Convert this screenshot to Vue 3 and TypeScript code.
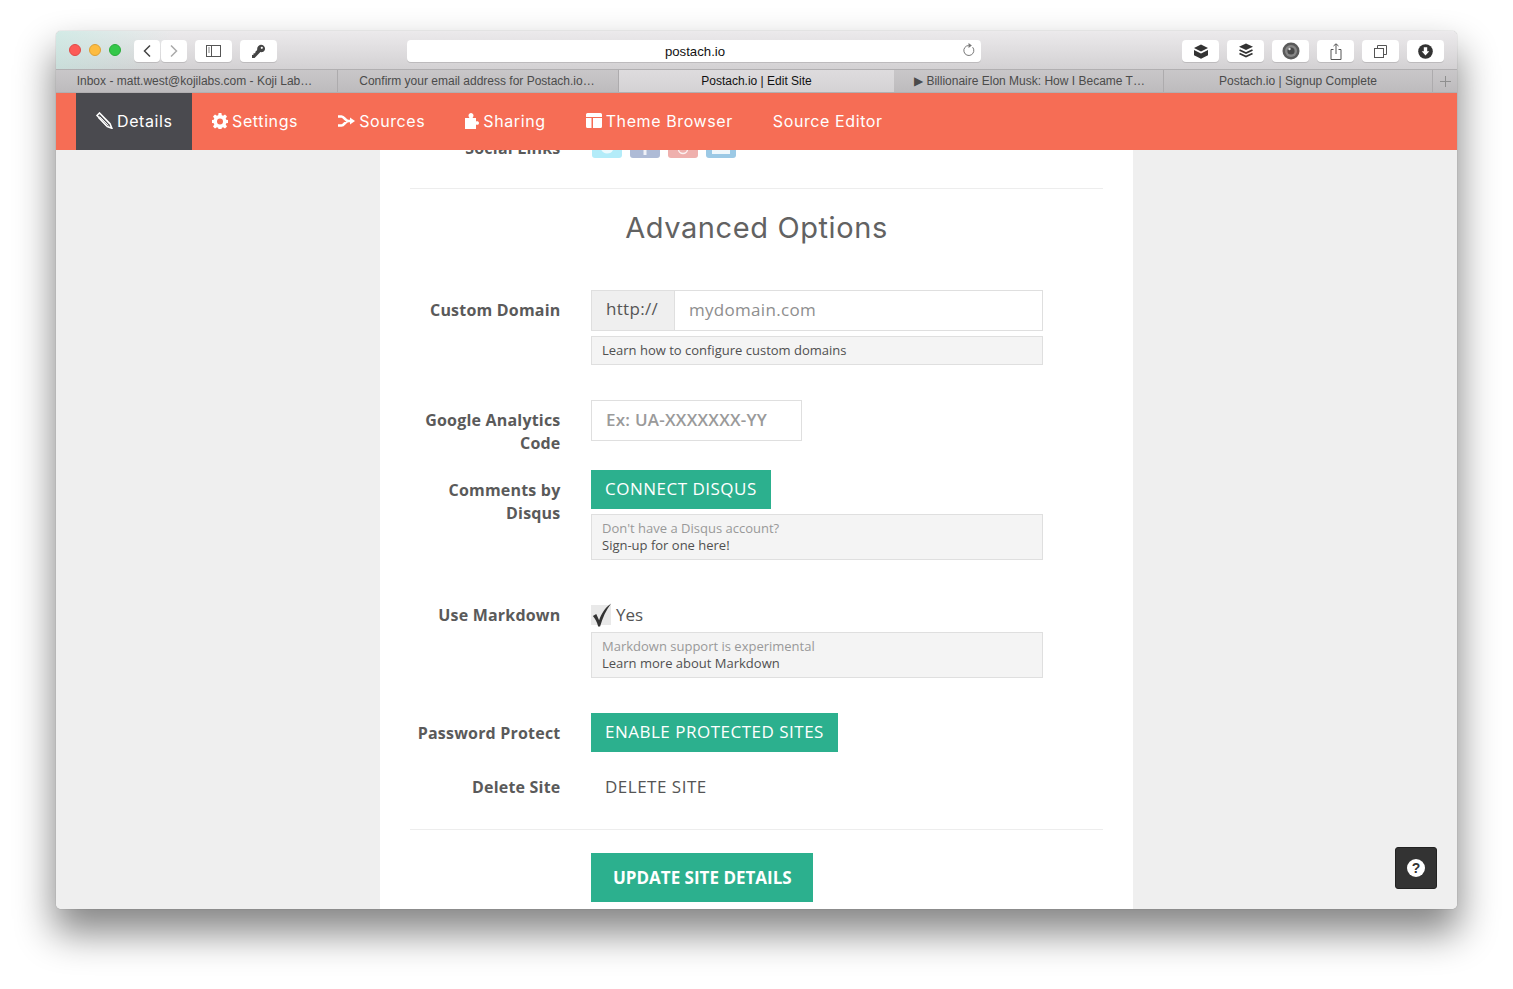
<script setup lang="ts">
const tabs = [
  { label: 'Inbox - matt.west@kojilabs.com - Koji Lab…', cls: 'tab-a' },
  { label: 'Confirm your email address for Postach.io…', cls: 'tab-b' },
  { label: 'Postach.io | Edit Site', cls: 'tab-c active' },
  { label: '▶ Billionaire Elon Musk: How I Became T…', cls: 'tab-d' },
  { label: 'Postach.io | Signup Complete', cls: 'tab-e' },
]
</script>

<template>
  <div class="stage">
    <div class="window">
      <header class="toolbar">
        <div class="lights">
          <span class="light red"></span><span class="light yellow"></span><span class="light lime"></span>
        </div>
        <div class="btn nav-btn first">
          <svg width="10" height="14" viewBox="0 0 10 14"><path d="M8 1.500 2.500 7 8 12.500" fill="none" stroke="#444" stroke-width="1.500"/></svg>
        </div>
        <div class="btn nav-btn second">
          <svg width="10" height="14" viewBox="0 0 10 14"><path d="M2 1.500 7.500 7 2 12.500" fill="none" stroke="#aaa" stroke-width="1.500"/></svg>
        </div>
        <div class="btn wide side">
          <svg width="15" height="12" viewBox="0 0 15 12"><rect x=".5" y=".5" width="14" height="11" fill="none" stroke="#555"/><path d="M5.500 .5v11" stroke="#555"/><path d="M2 3h2M2 5h2M2 7h2" stroke="#888"/></svg>
        </div>
        <div class="btn wide key">
          <svg width="15" height="15" viewBox="0 0 15 15"><path d="M9.800.8a4 4 0 0 1 4.200 4.400c-.4 2.200-2.600 3.500-4.600 2.900L3.600 14H1v-3l1.500-.2.1-1.500 1.600-.1.2-1.400 1.800-1.700C5.700 3.500 7.500 1 9.800.8Z" fill="#444"/><circle cx="10.800" cy="3.800" r="1.100" fill="#fff"/></svg>
        </div>
        <div class="url">
          <span class="url-text">postach.io</span>
          <svg class="reload" width="13" height="14" viewBox="0 0 13 14"><path d="M10.600 4.200A5 5 0 1 1 6.500 2.500" fill="none" stroke="#777" stroke-width="1"/><path d="M6.500 0v5l3.400-2.500Z" fill="#777"/></svg>
        </div>
        <div class="right-btns">
          <div class="btn wide">
            <svg width="16" height="15" viewBox="0 0 16 15"><path d="M8 .5 15 4 8 7.500 1 4Z" fill="#333"/><path d="M1 6 8 9.500 15 6v5.300l-7 3.500-7-3.500Z" fill="#333"/></svg>
          </div>
          <div class="btn wide">
            <svg width="16" height="16" viewBox="0 0 16 16"><path d="M8 .5 15 3.700 8 7 1 3.700Z" fill="#333"/><path d="M1.500 7 8 10l6.500-3M1.500 10.500 8 13.500l6.500-3" fill="none" stroke="#333" stroke-width="1.800"/></svg>
          </div>
          <div class="btn wide">
            <svg width="18" height="18" viewBox="0 0 18 18"><circle cx="9" cy="9" r="8.500" fill="#5a5a5a"/><circle cx="9" cy="9" r="6" fill="#868686"/><circle cx="9" cy="9" r="3.600" fill="#484848"/><circle cx="7.500" cy="7" r="1.200" fill="#ddd"/></svg>
          </div>
          <div class="btn wide">
            <svg width="12" height="17" viewBox="0 0 12 17"><path d="M3.500 6.500H1v10h10v-10H8.500M6 11V1M3.500 3 6 .8 8.500 3" fill="none" stroke="#555"/></svg>
          </div>
          <div class="btn wide">
            <svg width="13" height="13" viewBox="0 0 13 13"><path d="M3.500 3.500V.5h9v9h-3" fill="none" stroke="#555"/><rect x=".5" y="3.500" width="9" height="9" fill="none" stroke="#555"/></svg>
          </div>
          <div class="btn wide">
            <svg width="15" height="15" viewBox="0 0 15 15"><circle cx="7.500" cy="7.500" r="7.300" fill="#333"/><path d="M5.800 3.200h3.400v4h2.100L7.500 11.600 3.700 7.200h2.100Z" fill="#fff"/></svg>
          </div>
        </div>
      </header>

      <div class="tabs">
        <div v-for="t in tabs" :key="t.label" class="tab" :class="t.cls">{{ t.label }}</div>
        <div class="tab-plus">
          <svg width="11" height="11" viewBox="0 0 11 11"><path d="M5.500 0v11M0 5.500h11" stroke="#8f8f8f"/></svg>
        </div>
      </div>

      <nav class="topnav">
        <a class="item current">
          <svg width="17" height="17" viewBox="0 0 17 17"><path d="M1 3.500 3.500 1 14 11.800l1.800 4.400-4.500-1.700Z" fill="none" stroke="#fff" stroke-width="1.600"/><path d="M3.500 4.500l9 9M5.500 3.500l8 8.500M2.500 6l8 8" stroke="#fff" stroke-width=".9"/></svg>
          <span>Details</span>
        </a>
        <a class="item">
          <svg width="16" height="16" viewBox="0 0 16 16"><path fill="#fff" fill-rule="evenodd" d="M6.600 0h2.800l.4 2.200 1.300.6L13 1.500l2 2-1.300 1.900.5 1.300 2.300.4v2.800l-2.300.4-.5 1.300 1.300 1.900-2 2-1.900-1.300-1.300.5-.4 2.300H6.600l-.4-2.300-1.300-.5L3 15.500l-2-2 1.300-1.900-.5-1.300L-.5 9.900V7.100l2.300-.4.5-1.300L1 3.500l2-2 1.900 1.300 1.300-.6ZM8 5.500a3 3 0 1 0 0 6 3 3 0 0 0 0-6Z"/></svg>
          <span>Settings</span>
        </a>
        <a class="item">
          <svg width="17" height="12" viewBox="0 0 17 12"><path d="M0 1.500h3.500c3 0 3.500 4.500 7 4.500h2M0 10.500h3.500c3 0 3.500-4.500 7-4.500" fill="none" stroke="#fff" stroke-width="2.600"/><path d="M12 2.500 17 6l-5 3.500Z" fill="#fff"/></svg>
          <span>Sources</span>
        </a>
        <a class="item">
          <svg width="14" height="16" viewBox="0 0 14 16"><path fill="#fff" d="M0 5h4.500C3.700 4 3.500 3.300 3.500 2.600 3.500 1 4.800 0 6 0s2.500 1 2.500 2.600c0 .7-.2 1.400-1 2.400H11v3.500c1-.6 3-.4 3 1.500s-2 2.200-3 1.500V16H0Z"/></svg>
          <span>Sharing</span>
        </a>
        <a class="item">
          <svg width="16" height="15" viewBox="0 0 16 15"><path fill="#fff" d="M1.500 0h13A1.500 1.500 0 0 1 16 1.500V4H0V1.500A1.500 1.500 0 0 1 1.500 0ZM0 5h5.500v10H1.500A1.500 1.500 0 0 1 0 13.500ZM7 5h9v8.500a1.500 1.500 0 0 1-1.500 1.500H7Z"/></svg>
          <span>Theme Browser</span>
        </a>
        <a class="item"><span>Source Editor</span></a>
      </nav>

      <main class="content">
        <section class="card">
          <div class="row social-row">
            <label class="label">Social Links</label>
            <div class="socials">
              <span class="social tw"><svg width="30" height="21" viewBox="0 0 30 21"><path d="M9 12h12v1c-1 2.500-3 3.500-6 3.500S10 15 9 12Z" fill="#fff" opacity=".75"/></svg></span>
              <span class="social fb"><svg width="30" height="21" viewBox="0 0 30 21"><rect x="13.500" y="11" width="3" height="7" fill="#fff" opacity=".8"/></svg></span>
              <span class="social ig"><svg width="30" height="21" viewBox="0 0 30 21"><circle cx="15" cy="12" r="4.500" fill="none" stroke="#fff" stroke-width="1.400" opacity=".8"/></svg></span>
              <span class="social em"><svg width="30" height="21" viewBox="0 0 30 21"><rect x="6" y="10" width="18" height="7" fill="#fff" opacity=".85"/></svg></span>
            </div>
          </div>
          <hr class="rule first-rule" />
          <h2 class="title">Advanced Options</h2>

          <div class="row domain-row">
            <label class="label">Custom Domain</label>
            <div class="field">
              <div class="group">
                <span class="prefix">http://</span>
                <span class="input-text">mydomain.com</span>
              </div>
              <div class="help one">Learn how to configure custom domains</div>
            </div>
          </div>

          <div class="row ga-row">
            <label class="label">Google Analytics Code</label>
            <div class="field">
              <div class="ga-input">Ex: UA-XXXXXXX-YY</div>
            </div>
          </div>

          <div class="row disqus-row">
            <label class="label">Comments by Disqus</label>
            <div class="field">
              <a class="cta">CONNECT DISQUS</a>
              <div class="help two">
                <span class="muted">Don't have a Disqus account?</span>
                <span>Sign-up for one here!</span>
              </div>
            </div>
          </div>

          <div class="row md-row">
            <label class="label">Use Markdown</label>
            <div class="field">
              <div class="check-line">
                <span class="box">
                  <svg class="tick" width="22" height="24" viewBox="0 0 22 25"><path d="M1.500 13.500 5 11.500l3 6.500C10 11.500 14 5 20.500.5 15.500 7 11.500 15.500 9 24.500H7C6 20 4 16.500 1.500 13.500Z" fill="#333"/></svg>
                </span>
                <span class="yes">Yes</span>
              </div>
              <div class="help two">
                <span class="muted">Markdown support is experimental</span>
                <span>Learn more about Markdown</span>
              </div>
            </div>
          </div>

          <div class="row pw-row">
            <label class="label">Password Protect</label>
            <div class="field"><a class="cta">ENABLE PROTECTED SITES</a></div>
          </div>

          <div class="row del-row">
            <label class="label">Delete Site</label>
            <div class="field"><a class="plain">DELETE SITE</a></div>
          </div>

          <hr class="rule last-rule" />
          <div class="row submit-row">
            <span class="label"></span>
            <div class="field"><a class="update">UPDATE SITE DETAILS</a></div>
          </div>
        </section>

        <button class="help-btn" aria-label="Help">
          <span class="q">?</span>
        </button>
      </main>
    </div>
  </div>
</template>

<style>
html, body { margin: 0; background: #fff; }
</style>

<style scoped>
.stage {
  width: 1513px;
  height: 989px;
  padding: 31px 56px 80px;
  box-sizing: border-box;
  overflow: hidden;
  background: #fff;
}
.window {
  width: 1401px;
  height: 878px;
  border-radius: 5px;
  overflow: hidden;
  display: flex;
  flex-direction: column;
  box-shadow: 0 22px 38px 2px rgba(0, 0, 0, .48), 0 0 1px rgba(0, 0, 0, .45);
}
.toolbar {
  height: 39px;
  flex: none;
  display: flex;
  align-items: flex-start;
  padding-top: 9px;
  box-sizing: border-box;
  background:
    linear-gradient(115deg, rgba(190, 235, 225, .55) 0, rgba(190, 235, 225, 0) 110px),
    linear-gradient(#eceaec, #d3d1d3);
  border-bottom: 1px solid #b1afb1;
}
.lights { display: flex; gap: 8px; padding: 4px 0 0 13px; width: 78px; box-sizing: border-box; flex: none; }
.light { width: 12px; height: 12px; border-radius: 50%; box-sizing: border-box; }
.red { background: #fc5b57; border: 1px solid #e04a46; }
.yellow { background: #fdbc40; border: 1px solid #dea034; }
.lime { background: #34c84a; border: 1px solid #2aac3b; }
.btn {
  height: 22px;
  background: #fff;
  border-radius: 4px;
  box-shadow: 0 1px 0 #bdbbbd;
  display: flex;
  align-items: center;
  justify-content: center;
  flex: none;
}
.nav-btn { width: 26px; }
.second { margin-left: 1px; }
.wide { width: 37px; }
.side { margin-left: 8px; }
.key { margin-left: 8px; }
.url {
  position: relative;
  flex: none;
  width: 574px;
  height: 22px;
  margin-left: 130px;
  background: #fff;
  border-radius: 4px;
  box-shadow: 0 1px 0 #bdbbbd;
  display: flex;
  align-items: center;
  justify-content: center;
}
.url-text { font: 13.200px "Liberation Sans", Arial, sans-serif; color: #111; margin-left: 2px; padding-top: 1px; }
.reload { position: absolute; right: 6px; top: 3px; }
.right-btns { display: flex; gap: 8px; margin-left: 201px; }

.tabs {
  height: 23px;
  flex: none;
  display: flex;
  background: linear-gradient(#c9c7c9, #bdbbbd);
  border-bottom: 1px solid #b1afb1;
  box-sizing: border-box;
  font: 12px "Liberation Sans", Arial, sans-serif;
  color: #4b4b4b;
}
.tab {
  flex: none;
  display: flex;
  align-items: center;
  justify-content: center;
  border-right: 1px solid #adabad;
  box-sizing: border-box;
  white-space: nowrap;
}
.tab-a { width: 282px; padding-right: 4px; }
.tab-b { width: 281px; padding-right: 2px; }
.tab-c { width: 275px; }
.tab-d { width: 270px; padding-left: 2px; }
.tab-e { width: 269px; }
.active { background: linear-gradient(#dedcde, #d4d2d4); color: #111; border-right: 0; }
.tab-plus { flex: 1; display: flex; align-items: center; justify-content: center; }

.topnav {
  height: 57px;
  flex: none;
  background: #f66d55;
  display: flex;
  padding-left: 20px;
  position: relative;
  z-index: 2;
  font-family: Inter, "Open Sans", sans-serif;
  font-size: 16px;
  letter-spacing: .6px;
  color: #fff;
}
.item {
  display: flex;
  align-items: center;
  gap: 4px;
  padding: 0 20px 2px;
  white-space: nowrap;
}
.current { background: #4a4a4f; padding-right: 19.500px; }

.content {
  position: relative;
  flex: 1;
  min-height: 0;
  overflow: hidden;
  background: #efefef;
  font-family: "Open Sans", Lato, sans-serif;
}
.card {
  width: 753px;
  margin: -20px auto 0;
  height: 900px;
  padding: 0 30px;
  box-sizing: border-box;
  background: #fff;
  color: #555;
}
.row { display: flex; gap: 30.500px; }
.label {
  flex: none;
  width: 150.500px;
  text-align: right;
  font-weight: 700;
  font-size: 16px;
  letter-spacing: .2px;
  line-height: 23px;
  color: #5a5a5a;
}
.field { width: 452px; }
.social-row { height: 38px; padding-top: 7px; box-sizing: border-box; }
.socials { display: flex; gap: 8px; padding-left: 1px; }
.social { width: 30px; height: 21px; border-radius: 3px; overflow: hidden; display: block; }
.social svg { display: block; }
.tw { background: #b3ecf9; }
.fb { background: #aebbd6; }
.ig { background: #efb0ad; }
.em { background: #9cc9e5; }
.rule { border: 0; border-top: 1px solid #ededed; margin: 0; }
.first-rule { margin-top: 20px; }
.title {
  margin: 18px 0 0;
  height: 83px;
  font-family: Inter, "Open Sans", sans-serif;
  font-weight: 400;
  font-size: 29px;
  letter-spacing: .6px;
  line-height: 42px;
  color: #626262;
  text-align: center;
}
.domain-row .label { padding-top: 9px; }
.group {
  display: flex;
  height: 41px;
  box-sizing: border-box;
  border: 1px solid #dfdfdf;
  font-size: 17px;
  letter-spacing: .3px;
}
.prefix {
  width: 83px;
  flex: none;
  box-sizing: border-box;
  border-right: 1px solid #dfdfdf;
  background: #efefef;
  padding-left: 14px;
  line-height: 36px;
  color: #555;
}
.input-text { padding-left: 14px; line-height: 38px; color: #8e8e8e; }
.help {
  margin-top: 5px;
  box-sizing: border-box;
  border: 1px solid #dfdfdf;
  background: #f4f4f4;
  padding: 0 10px;
  font-size: 13px;
  color: #505050;
}
.one { height: 29px; line-height: 27px; }
.two { height: 46px; padding-top: 5px; line-height: 17px; display: flex; flex-direction: column; }
.muted { color: #999; }
.ga-row { margin-top: 35px; height: 70px; }
.ga-row .label { padding-top: 9px; }
.ga-input {
  width: 211px;
  height: 41px;
  box-sizing: border-box;
  border: 1px solid #dfdfdf;
  padding-left: 14px;
  font-size: 17px;
  font-weight: 600;
  letter-spacing: .25px;
  line-height: 38px;
  color: #9a9a9a;
}
.disqus-row { height: 90px; }
.disqus-row .label { padding-top: 9px; }
.cta {
  display: inline-block;
  height: 39px;
  line-height: 38px;
  padding: 0 14px;
  background: #2cb08e;
  color: #fff;
  font-size: 17px;
  letter-spacing: .5px;
}
.md-row { margin-top: 43px; height: 110px; }
.md-row .label { padding-top: 1px; }
.check-line { display: flex; align-items: center; height: 24px; }
.box { position: relative; width: 20px; height: 20px; background: #e9e9e9; display: block; margin-bottom: 2px; margin-top: 2px; }
.tick { position: absolute; left: 0; top: -2px; }
.yes { margin-left: 5px; font-size: 17px; color: #555; padding-bottom: 2px; }
.pw-row { height: 62px; }
.pw-row .label { padding-top: 9px; }
.del-row { height: 54px; }
.del-row .label { padding-top: 1px; }
.plain { display: block; padding: 0 14px; font-size: 17px; letter-spacing: .5px; line-height: 24px; color: #555; }
.last-rule { margin-top: 0; }
.submit-row { margin-top: 23px; }
.update {
  display: inline-block;
  height: 49px;
  line-height: 50px;
  padding: 0 21px 0 22px;
  background: #2cb08e;
  color: #fff;
  font-size: 17px;
  font-weight: 700;
}
.help-btn {
  position: absolute;
  right: 20px;
  bottom: 20px;
  width: 42px;
  height: 42px;
  padding: 0;
  background: #333;
  border: 1px solid #222;
  border-radius: 3px;
  display: flex;
  align-items: center;
  justify-content: center;
}
.q {
  display: block;
  width: 18px;
  height: 18px;
  border-radius: 50%;
  background: #fff;
  color: #333;
  font: 700 14px/18px "Liberation Sans", Arial, sans-serif;
  text-align: center;
}
</style>
